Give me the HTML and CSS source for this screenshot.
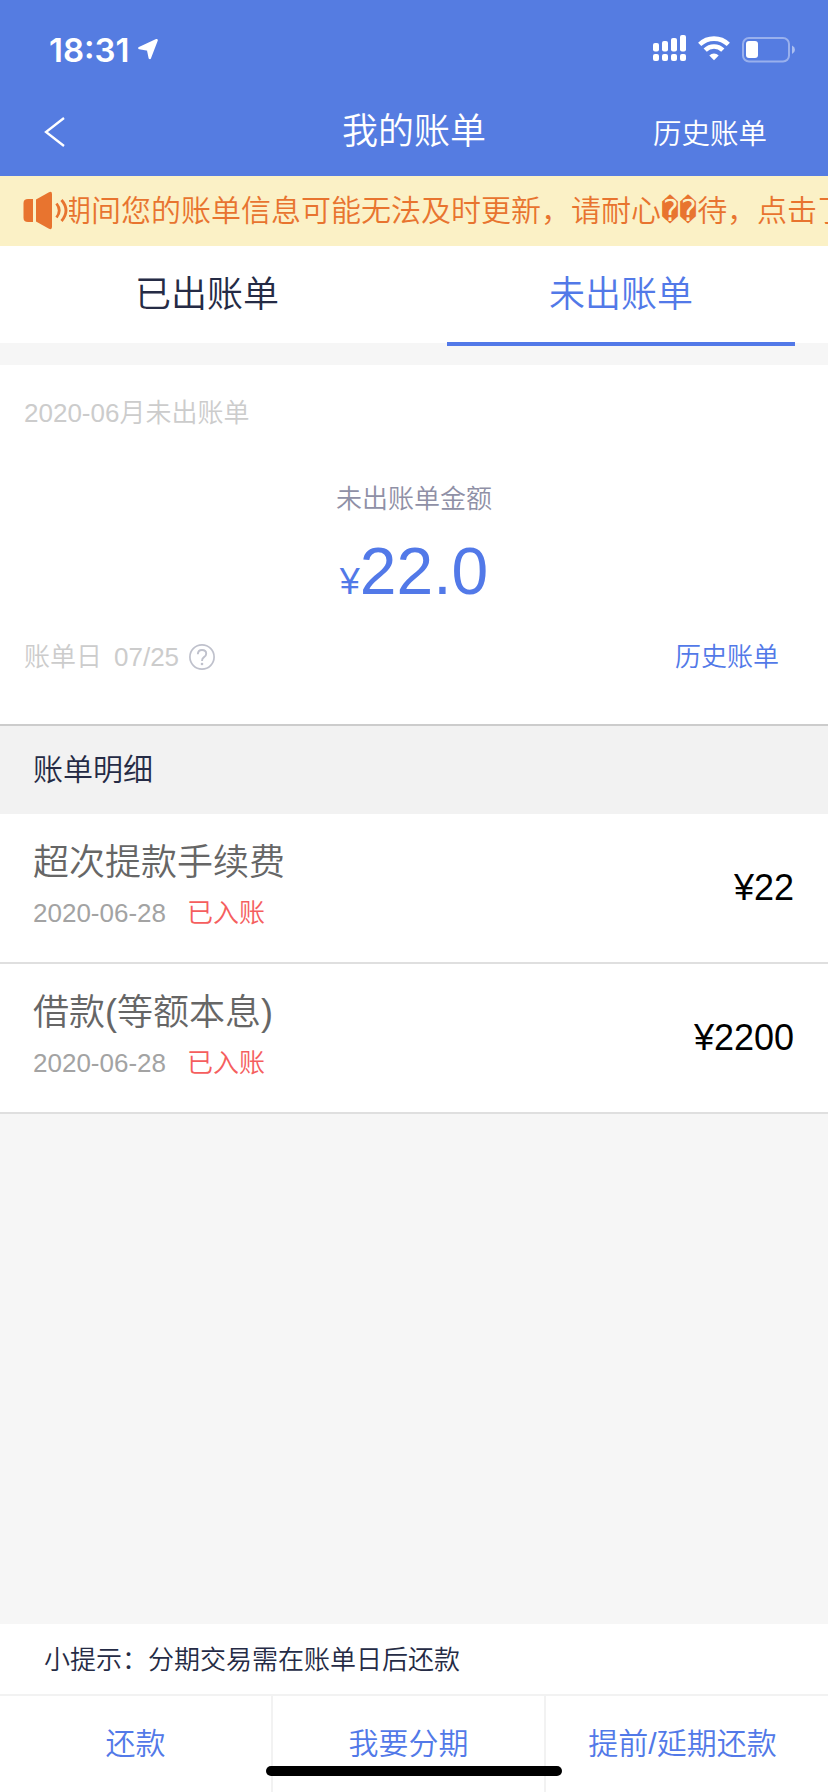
FILE: index.html
```html
<!DOCTYPE html>
<html lang="zh-CN">
<head>
    <meta charset="UTF-8">
    <meta name="viewport" content="width=device-width, initial-scale=1.0">
    <title>我的账单</title>
    <link rel="stylesheet" href="styles.css">
</head>
<body>
    <div class="page">
        <header class="header">
            <div class="status-bar">
                <div class="status-left">
                    <span class="time">18:31</span>
                    <svg class="location-icon" width="20" height="21" viewBox="0 0 20 21">
                        <path d="M18.6 1.2 L11.8 19 L10 10.6 L1.4 9 Z" fill="#fff" stroke="#fff" stroke-width="2.4" stroke-linejoin="round"/>
                    </svg>
                </div>
                <div class="status-right">
                    <svg width="34" height="27" viewBox="0 0 34 27" fill="#fff">
                        <rect x="0" y="8" width="6" height="8.5" rx="2"/>
                        <rect x="9" y="6" width="6" height="10.5" rx="2"/>
                        <rect x="18" y="3" width="6" height="13.5" rx="2"/>
                        <rect x="27" y="0" width="6" height="16.5" rx="2"/>
                        <rect x="0" y="19" width="6" height="7" rx="2"/>
                        <rect x="9" y="19" width="6" height="7" rx="2"/>
                        <rect x="18" y="19" width="6" height="7" rx="2"/>
                        <rect x="27" y="19" width="6" height="7" rx="2"/>
                    </svg>
                    <svg class="wifi-icon" width="32" height="25" viewBox="0 0 32 25">
                        <path d="M1.7 8.4 A20.5 20.5 0 0 1 30.3 8.4" fill="none" stroke="#fff" stroke-width="4.6"/>
                        <path d="M7.2 14.1 A12.6 12.6 0 0 1 24.8 14.1" fill="none" stroke="#fff" stroke-width="4.6"/>
                        <path d="M11.3 19.4 A7 7 0 0 1 20.7 19.4 L16 24.2 Z" fill="#fff"/>
                    </svg>
                    <svg class="battery-icon" width="54" height="26" viewBox="0 0 54 26">
                        <rect x="1" y="1" width="46" height="23.5" rx="6" fill="none" stroke="#fff" stroke-opacity="0.4" stroke-width="2"/>
                        <rect x="4" y="4" width="12" height="17" rx="3" fill="#fff"/>
                        <path d="M50 8.5 Q53 10 53 12.8 Q53 15.5 50 17 Z" fill="#fff" fill-opacity="0.5"/>
                    </svg>
                </div>
            </div>
            <div class="nav-bar">
                <a class="back">
                    <svg width="22" height="32" viewBox="0 0 22 32">
                        <path d="M20 2 L2 16 L20 30" fill="none" stroke="#fff" stroke-width="2.3"/>
                    </svg>
                </a>
                <h1>我的账单</h1>
                <a class="nav-history">历史账单</a>
            </div>
        </header>

        <div class="notice">
            <svg class="speaker-icon" width="46" height="40" viewBox="0 0 46 40">
                <path d="M10 8 H5 Q0.5 8 0.5 12 V27 Q0.5 31 5 31 H10 Z" fill="#e8742f"/>
                <path d="M13 8.5 L26 1.2 Q29 0 29 3 V36 Q29 39 26 37.8 L13 30.5 Z" fill="#e8742f"/>
                <path d="M33.5 12.5 Q39 19.5 33.5 26.5 M38.5 9 Q47.5 19.5 38.5 30" fill="none" stroke="#e8742f" stroke-width="2.8"/>
            </svg>
            <div class="notice-window">
                <p class="notice-text">期间您的账单信息可能无法及时更新，请耐心<span class="broken">��</span>待，点击了</p>
            </div>
        </div>

        <nav class="tabs">
            <a class="tab">已出账单</a>
            <a class="tab active">未出账单</a>
        </nav>

        <section class="summary">
            <p class="month">2020-06月未出账单</p>
            <p class="amount-label">未出账单金额</p>
            <p class="amount"><span class="currency">¥</span>22.0</p>
            <div class="bill-day">
                <span>账单日</span>
                <span class="day">07/25</span>
                <svg width="26" height="26" viewBox="0 0 26 26" fill="none" stroke="#bfc1cc">
                    <circle cx="13" cy="13" r="12.1" stroke-width="1.7"/>
                    <path d="M8.8 10.3 Q9 6 13 6 Q17.2 6 17.2 9.7 Q17.2 11.7 15 13.1 Q13 14.4 13 17" stroke-width="1.9"/>
                    <circle cx="13" cy="20" r="1.3" fill="#bfc1cc" stroke="none"/>
                </svg>
                <a class="history">历史账单</a>
            </div>
        </section>

        <h2 class="detail-title">账单明细</h2>
        <ul class="detail-list">
            <li>
                <div>
                    <p class="item-name">超次提款手续费</p>
                    <p class="item-date">2020-06-28<span class="item-status">已入账</span></p>
                </div>
                <span class="item-price">¥22</span>
            </li>
            <li>
                <div>
                    <p class="item-name">借款(等额本息)</p>
                    <p class="item-date">2020-06-28<span class="item-status">已入账</span></p>
                </div>
                <span class="item-price">¥2200</span>
            </li>
        </ul>

        <footer class="footer">
            <p class="tip">小提示：分期交易需在账单日后还款</p>
            <div class="actions">
                <a>还款</a>
                <a>我要分期</a>
                <a>提前/延期还款</a>
            </div>
            <div class="home-indicator"></div>
        </footer>
    </div>
</body>
</html>
```
FILE: styles.css
```css
* {
    box-sizing: border-box;
    margin: 0;
    padding: 0;
}
body {
    background-color: #f6f6f6;
    color: #252b45;
    font-family: "Liberation Sans", "Noto Sans CJK SC", sans-serif;
    font-weight: 350;
}
svg {
    display: block;
    flex: none;
}
.page {
    display: flex;
    flex-direction: column;
    width: 828px;
    height: 1792px;
    overflow: hidden;
}

/* header */
.header {
    height: 176px;
    background-color: #557ce1;
    color: #ffffff;
}
.status-bar {
    display: flex;
    justify-content: space-between;
    height: 88px;
    padding: 30px 32px 0 49px;
}
.status-left {
    display: flex;
    gap: 8px;
}
.time {
    font-family: Inter, sans-serif;
    font-size: 33px;
    font-weight: 600;
    line-height: 40px;
}
.location-icon {
    margin-top: 9px;
}
.status-right {
    display: flex;
    padding-top: 5px;
}
.wifi-icon {
    margin: 1px 12px 0 11px;
}
.battery-icon {
    margin-top: 2px;
}
.nav-bar {
    display: grid;
    grid-template-columns: 1fr 144px 1fr;
    align-items: center;
    height: 88px;
}
.back {
    padding-left: 44px;
}
.nav-bar h1 {
    font-size: 36px;
    font-weight: 350;
    line-height: 88px;
    white-space: nowrap;
}
.nav-history {
    padding: 4px 61px 0 0;
    font-size: 28.5px;
    line-height: 84px;
    text-align: right;
}

/* scrolling notice */
.notice {
    display: flex;
    align-items: center;
    height: 70px;
    padding-left: 23px;
    background-color: #fbf1c6;
    color: #e8742f;
}
.notice-window {
    flex: 1;
    overflow: hidden;
}
.notice-text {
    margin-left: -8px;
    padding-top: 2px;
    font-size: 30px;
    line-height: 70px;
    white-space: nowrap;
}
.broken {
    font-family: "Liberation Mono", monospace;
}

/* tabs */
.tabs {
    display: flex;
    height: 97px;
    background-color: #ffffff;
}
.tab {
    flex: 1;
    height: 100px;
    margin: 0 33px;
    font-size: 36px;
    line-height: 98px;
    text-align: center;
}
.tab.active {
    border-bottom: 4px solid #5279e8;
    color: #5279e8;
}

/* summary */
.summary {
    height: 361px;
    margin-top: 22px;
    padding: 28px 49px 0 24px;
    border-bottom: 2px solid #cccccc;
    background-color: #ffffff;
    color: #cccccc;
    font-size: 26px;
    line-height: 40px;
}
.amount-label {
    margin: 46px -25px 0 0;
    color: #8f90a6;
    text-align: center;
}
.amount {
    height: 78px;
    margin: 13px -25px 0 0;
    color: #5279e8;
    font-size: 66px;
    line-height: 78px;
    text-align: center;
}
.currency {
    font-size: 36px;
}
.bill-day {
    display: flex;
    align-items: center;
    margin-top: 27px;
}
.day {
    margin: 0 10px 0 12px;
}
.history {
    margin-left: auto;
    color: #5279e8;
}

/* details */
.detail-title {
    height: 88px;
    padding-left: 33px;
    background-color: #f2f2f2;
    font-size: 30px;
    font-weight: 350;
    line-height: 88px;
}
.detail-list {
    list-style: none;
}
.detail-list li {
    display: flex;
    align-items: center;
    justify-content: space-between;
    height: 150px;
    padding: 0 34px 0 33px;
    border-bottom: 2px solid #dfdfdf;
    background-color: #ffffff;
}
.item-name {
    color: #666666;
    font-size: 36px;
    line-height: 54px;
}
.item-date {
    padding-bottom: 4px;
    color: #a3a3a3;
    font-size: 26px;
    line-height: 46px;
}
.item-status {
    margin-left: 21px;
    color: #f55e5e;
}
.item-price {
    color: #000000;
    font-size: 36px;
}

/* footer */
.footer {
    position: relative;
    margin-top: auto;
    background-color: #ffffff;
}
.tip {
    height: 70px;
    padding-left: 44px;
    font-size: 26px;
    line-height: 72px;
}
.actions {
    display: grid;
    grid-template-columns: repeat(3, 273px);
    height: 98px;
    border-top: 2px solid #f2f2f2;
}
.actions a {
    border-right: 2px solid #f2f2f2;
    color: #5279e8;
    font-size: 30px;
    line-height: 96px;
    text-align: center;
}
.actions a:last-child {
    border-right: none;
}
.home-indicator {
    position: absolute;
    bottom: 16px;
    left: 266px;
    width: 296px;
    height: 10px;
    border-radius: 5px;
    background-color: #000000;
}
```
